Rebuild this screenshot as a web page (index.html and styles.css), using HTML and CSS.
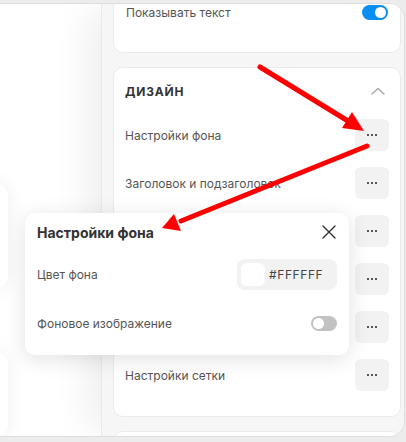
FILE: index.html
```html
<!DOCTYPE html>
<html lang="ru">
<head>
<meta charset="utf-8">
<title>Редактор</title>
<link rel="stylesheet" href="styles.css">
</head>
<body>
<div class="window">
  <div class="canvas">
    <div class="block block-a"></div>
    <div class="block block-b"></div>
  </div>

  <aside class="sidebar">
    <div class="sidebar-scroll">
      <section class="card card-top">
        <div class="row row-toggle">
          <span class="label">Показывать текст</span>
          <span class="switch switch-on"><span class="knob"></span></span>
        </div>
      </section>

      <section class="card card-design">
        <div class="card-head">
          <h3 class="card-title">ДИЗАЙН</h3>
          <svg class="chevron" width="14" height="8" viewBox="0 0 14 8"><path d="M1 7 L7 1.5 L13 7" fill="none" stroke="#a8a8a8" stroke-width="1.4" stroke-linecap="round" stroke-linejoin="round"/></svg>
        </div>
        <ul class="rows">
          <li class="row"><span class="label">Настройки фона</span><button class="more"><span></span><span></span><span></span></button></li>
          <li class="row"><span class="label">Заголовок и подзаголовок</span><button class="more"><span></span><span></span><span></span></button></li>
          <li class="row"><span class="label"></span><button class="more"><span></span><span></span><span></span></button></li>
          <li class="row"><span class="label"></span><button class="more"><span></span><span></span><span></span></button></li>
          <li class="row"><span class="label"></span><button class="more"><span></span><span></span><span></span></button></li>
          <li class="row"><span class="label">Настройки сетки</span><button class="more"><span></span><span></span><span></span></button></li>
        </ul>
      </section>

      <section class="card card-next"></section>
    </div>
  </aside>

  <div class="popover">
    <div class="popover-head">
      <h4 class="popover-title">Настройки фона</h4>
      <svg class="close" width="14" height="14" viewBox="0 0 14 14"><path d="M1 1 L13 13 M13 1 L1 13" stroke="#333" stroke-width="1.4" stroke-linecap="round"/></svg>
    </div>
    <div class="prow">
      <span class="label">Цвет фона</span>
      <span class="color-field"><span class="swatch"></span><span class="hex">#FFFFFF</span></span>
    </div>
    <div class="prow">
      <span class="label">Фоновое изображение</span>
      <span class="switch switch-off"><span class="knob"></span></span>
    </div>
  </div>

  <svg class="pointers" width="406" height="442" viewBox="0 0 406 442">
    <g stroke="#ff0000" stroke-width="5" stroke-linecap="round">
      <line x1="260" y1="67" x2="348" y2="121"/>
      <line x1="367" y1="146" x2="181" y2="221"/>
    </g>
    <g fill="#ff0000">
      <polygon points="364,131 342,128 352,112"/>
      <polygon points="162,228 181,231 174,214"/>
    </g>
  </svg>
</div>
</body>
</html>
```

FILE: styles.css
```css
* {
  box-sizing: border-box;
}

html, body {
  margin: 0;
  padding: 0;
}

body {
  width: 406px;
  height: 442px;
  overflow: hidden;
  background: #ececec;
  font-family: Inter, "Noto Sans", sans-serif;
  color: #555;
}

.window {
  position: relative;
  display: flex;
  height: 434px;
  margin: 3px 1px 0 -30px;
  background: #fff;
  border: 1px solid #dedede;
  border-radius: 16px;
  overflow: hidden;
}

/* page preview on the left */
.canvas {
  width: 130px;
  flex: none;
  padding-top: 180px;
  display: flex;
  flex-direction: column;
  gap: 65px;
}

.block {
  width: 130px;
  margin-left: -93px;
  background: #fff;
  border-radius: 10px;
  box-shadow: 0 0 18px rgba(0, 0, 0, 0.07);
}

.block-a { height: 149px; }
.block-b { height: 120px; }

/* settings panel */
.sidebar {
  flex: 1;
  background: #f6f6f6;
  border-left: 1px solid #e9e9e9;
  box-shadow: -18px 0 36px -6px rgba(0, 0, 0, 0.07);
  padding: 0 3px 0 11px;
  position: relative;
  z-index: 1;
}

.sidebar-scroll {
  margin-top: -46px;
  display: flex;
  flex-direction: column;
  gap: 14px;
}

.card {
  background: #fff;
  border: 1px solid #ebebeb;
  border-radius: 10px;
}

.card-top {
  height: 95px;
  padding: 46px 12px 0;
}

.card-design {
  padding: 13px 11px 25px;
}

.card-next {
  height: 60px;
}

.row {
  display: flex;
  align-items: center;
  justify-content: space-between;
}

.row-toggle {
  height: 15px;
}

.label {
  font-size: 12px;
  color: #555;
  white-space: nowrap;
}

.card-head {
  height: 20px;
  display: flex;
  align-items: center;
  justify-content: space-between;
  padding-right: 4px;
}

.card-title {
  margin: 0;
  font-size: 12px;
  font-weight: 700;
  letter-spacing: 0.8px;
  color: #333;
}

.chevron {
  display: block;
}

.rows {
  list-style: none;
  margin: 18px 0 0;
  padding: 0;
  display: flex;
  flex-direction: column;
  gap: 16px;
}

.rows .row {
  height: 32px;
}

.more {
  width: 34px;
  height: 32px;
  flex: none;
  border: none;
  border-radius: 6px;
  background: #f2f2f2;
  display: flex;
  align-items: center;
  justify-content: center;
  gap: 2px;
  padding: 0;
}

.more span {
  width: 2px;
  height: 2px;
  background: #222;
  border-radius: 1px;
}

/* switches */
.switch {
  width: 26px;
  height: 15px;
  border-radius: 8px;
  display: flex;
  align-items: center;
  padding: 2px;
  flex: none;
}

.switch .knob {
  width: 11px;
  height: 11px;
  border-radius: 50%;
  background: #fff;
}

.switch-on {
  background: #0a8ef3;
  justify-content: flex-end;
}

.switch-off {
  background: #c2c2c2;
  justify-content: flex-start;
}

/* popover opened from the row menu */
.popover {
  position: absolute;
  left: 54px;
  top: 209px;
  width: 324px;
  height: 142px;
  background: #fff;
  border-radius: 10px;
  box-shadow: 0 4px 22px rgba(0, 0, 0, 0.12);
  padding: 9px 12px 0 12px;
  z-index: 2;
}

.popover-head {
  height: 20px;
  display: flex;
  align-items: center;
  justify-content: space-between;
  padding-right: 1px;
}

.popover-title {
  margin: 0;
  font-size: 14px;
  font-weight: 700;
  color: #333;
}

.close {
  display: block;
}

.prow {
  height: 31px;
  display: flex;
  align-items: center;
  justify-content: space-between;
}

.popover-head + .prow {
  margin-top: 17px;
}

.prow + .prow {
  margin-top: 18px;
}

.color-field {
  width: 100px;
  height: 31px;
  background: #f2f2f2;
  border-radius: 8px;
  padding: 4px;
  display: flex;
  align-items: center;
  gap: 4px;
}

.swatch {
  width: 24px;
  height: 23px;
  background: #fff;
  border-radius: 6px;
}

.hex {
  font-size: 12px;
  color: #444;
  letter-spacing: 0.6px;
}

.pointers {
  position: absolute;
  left: 29px;
  top: -4px;
  z-index: 3;
  pointer-events: none;
}
```
